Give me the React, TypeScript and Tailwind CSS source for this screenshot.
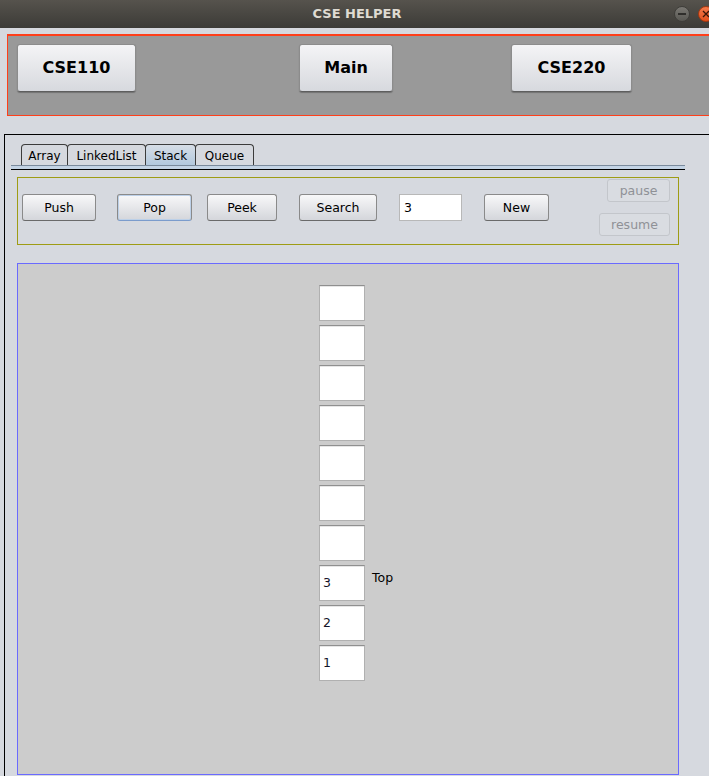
import React from "react";

const topBtn =
  "h-[48px] rounded-[3px] border border-[#8c8c8c] border-b-[#5e5e5e] bg-gradient-to-b from-[#f4f4f6] to-[#d7d9de] text-[16px] font-bold text-black flex items-center justify-center shadow-[0_1px_1px_rgba(0,0,0,0.25)]";

const btn =
  "h-[27px] pt-[1px] rounded-[3px] border border-[#8a8a8a] border-b-[#6a6a6a] bg-gradient-to-b from-[#f8f8f9] to-[#d4d6db] text-[12.5px] text-black flex items-center justify-center";

const disabledBtn =
  "h-[23px] pt-[1px] rounded-[3px] border border-[#c3c6cb] bg-[#d9dce1] text-[12.5px] text-[#8f9196] flex items-center justify-center";

function Cell({ value, top }: { value?: string; top?: boolean }) {
  return (
    <div className="flex items-start">
      <div className="w-[46px] h-[36px] bg-white border border-[#b0b0b0] border-t-[#8f8f8f] shadow-[inset_0_1px_0_#e6e6e6] flex items-center pl-[3px] text-[12.5px] text-[#141428]">
        {value}
      </div>
      {top && (
        <span className="ml-[7px] mt-[5px] leading-[15px] text-[12.5px] text-black">
          Top
        </span>
      )}
    </div>
  );
}

export default function App() {
  const cells = ["", "", "", "", "", "", "", "3", "2", "1"];

  return (
    <div className="w-[709px] h-[776px] overflow-hidden bg-[#d6d9df] font-['DejaVu_Sans',sans-serif] flex flex-col">
      {/* title bar */}
      <div className="h-[28px] shrink-0 flex items-center bg-gradient-to-b from-[#56534d] to-[#3c3b37]">
        <div className="flex-1" />
        <span className="text-[13px] font-bold text-[#dfdbd2]">CSE HELPER</span>
        <div className="flex-1 flex justify-end items-center gap-[8px] mr-[-5px]">
          <div className="w-[16px] h-[16px] rounded-full border border-[#3f3e3a] bg-gradient-to-b from-[#7a7873] to-[#595853] flex items-center justify-center">
            <div className="w-[8px] h-[1.5px] bg-[#2f2e2b]" />
          </div>
          <div className="w-[16px] h-[16px] rounded-full border border-[#a8380f] bg-gradient-to-b from-[#f37a4b] to-[#e2501b] flex items-center justify-center">
            <svg width="8" height="8" viewBox="0 0 8 8">
              <path d="M1 1L7 7M7 1L1 7" stroke="#3b1608" strokeWidth="1.3" />
            </svg>
          </div>
        </div>
      </div>

      {/* course switcher */}
      <div className="mt-[6px] ml-[7px] w-[720px] h-[82px] shrink-0 border border-t-2 border-[#ff3f1a] bg-[#999999] pt-[8px] flex items-start">
        <button className={`${topBtn} ml-[9px] w-[119px]`}>CSE110</button>
        <button className={`${topBtn} ml-[163px] w-[94px]`}>Main</button>
        <button className={`${topBtn} ml-[118px] w-[121px]`}>CSE220</button>
      </div>

      {/* tabbed frame */}
      <div className="mt-[18px] ml-[4px] w-[720px] flex-1 border-l border-t border-black pt-[9px] pl-[6px]">
        <div className="w-[674px]">
          <div className="flex pl-[10px] h-[21px] items-end">
            <div className="w-[47px] h-[21px] pt-[1px] rounded-t-[4px] border border-b-0 border-[#3c3c3c] flex items-center justify-center text-[12px] text-black">
              Array
            </div>
            <div className="w-[79px] h-[21px] pt-[1px] -ml-px rounded-t-[4px] border border-b-0 border-[#3c3c3c] flex items-center justify-center text-[12px] text-black">
              LinkedList
            </div>
            <div className="w-[51px] h-[21px] pt-[1px] -ml-px rounded-t-[4px] border border-b-0 border-[#3c3c3c] bg-gradient-to-b from-[#d6dde6] to-[#b3c9de] flex items-center justify-center text-[12px] text-black">
              Stack
            </div>
            <div className="w-[59px] h-[21px] pt-[1px] -ml-px rounded-t-[4px] border border-b-0 border-[#3c3c3c] flex items-center justify-center text-[12px] text-black">
              Queue
            </div>
          </div>
          <div className="h-[5px] border-t border-t-[#7a8a9c] bg-[#c3d3e4] border-b border-b-black" />

          {/* controls */}
          <div className="mt-[7px] mx-[6px] h-[68px] border border-[#9e9c14] flex items-start">
            <div className="mt-[16px] ml-[4px] flex items-center">
              <button className={`${btn} w-[74px]`}>Push</button>
              <button
                className={`${btn} ml-[21px] w-[75px] border-[#7b9ccc] border-b-[#7b9ccc] shadow-[inset_0_0_0_1px_#bcd0e8]`}
              >
                Pop
              </button>
              <button className={`${btn} ml-[15px] w-[70px]`}>Peek</button>
              <button className={`${btn} ml-[22px] w-[78px]`}>Search</button>
              <div className="ml-[22px] w-[63px] h-[27px] pt-[1px] bg-white border border-[#b8b8b8] pl-[4px] flex items-center text-[12.5px] text-black">
                3
              </div>
              <button className={`${btn} ml-[22px] w-[65px]`}>New</button>
            </div>
            <div className="ml-auto mr-[8px] mt-[1px] flex flex-col items-end gap-[11px]">
              <button className={`${disabledBtn} w-[63px]`}>pause</button>
              <button className={`${disabledBtn} w-[71px]`}>resume</button>
            </div>
          </div>

          {/* stack canvas */}
          <div className="mt-[18px] mx-[6px] h-[512px] border border-[#6a6aff] bg-[#cccccc] pt-[21px] pl-[301px] flex flex-col gap-[4px]">
            {cells.map((v, i) => (
              <Cell key={i} value={v} top={i === 7} />
            ))}
          </div>
        </div>
      </div>
    </div>
  );
}
